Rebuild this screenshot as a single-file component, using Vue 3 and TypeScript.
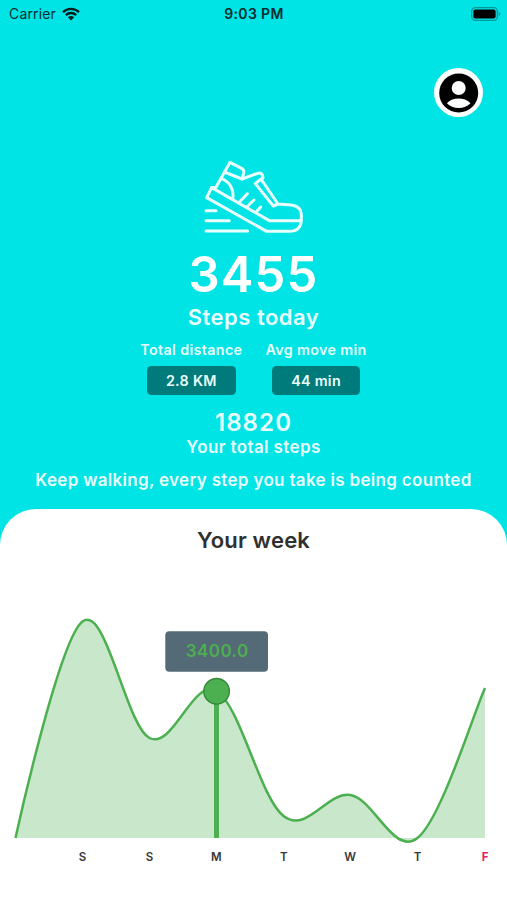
<script setup lang="ts">
import { computed } from 'vue'

interface Point {
  x: number
  y: number
}

interface DayLabel {
  text: string
  x: number
  today?: boolean
}

const stats = [
  { label: 'Total distance', value: '2.8 KM', name: 'distance' },
  { label: 'Avg move min', value: '44 min', name: 'minutes' },
]

const baseline = 268
const smoothness = 0.35

const points: Point[] = [
  { x: 15.5, y: 268 },
  { x: 82.5, y: 51.5 },
  { x: 149.5, y: 168 },
  { x: 216.5, y: 121 },
  { x: 283.5, y: 246 },
  { x: 350.5, y: 225 },
  { x: 417.5, y: 268 },
  { x: 485, y: 118 },
]

const days: DayLabel[] = [
  { text: 'S', x: 82.5 },
  { text: 'S', x: 149.5 },
  { text: 'M', x: 216.3 },
  { text: 'T', x: 283.7 },
  { text: 'W', x: 350 },
  { text: 'T', x: 417.5 },
  { text: 'F', x: 485, today: true },
]

const linePath = computed(() => {
  let d = `M${points[0].x} ${points[0].y}`
  let tx = 0
  let ty = 0
  for (let i = 1; i < points.length; i++) {
    const prev = points[i - 1]
    const cur = points[i]
    const next = points[Math.min(i + 1, points.length - 1)]
    const c1x = prev.x + tx
    const c1y = prev.y + ty
    tx = ((next.x - prev.x) / 2) * smoothness
    ty = ((next.y - prev.y) / 2) * smoothness
    d += ` C${c1x} ${c1y} ${cur.x - tx} ${cur.y - ty} ${cur.x} ${cur.y}`
  }
  return d
})

const areaPath = computed(() => `${linePath.value} V${baseline} H${points[0].x} Z`)
</script>

<template>
  <main class="screen">
    <header class="status">
      <div class="carrier">
        <span>Carrier</span>
        <svg class="wifi" viewBox="0 0 18 14">
          <path d="M1 5.1C5.6.7 12.4.7 17 5.1" />
          <path d="M3.8 8.1C6.8 5.3 11.2 5.3 14.2 8.1" />
          <path class="dot" d="M5.9 10.2C7.8 8.6 10.2 8.6 12.1 10.2L9 13.5Z" />
        </svg>
      </div>
      <span class="clock">9:03 PM</span>
      <svg class="battery" viewBox="0 0 30 14">
        <rect class="shell" x=".7" y=".7" width="25.6" height="12.6" rx="3.6" />
        <rect x="2.4" y="2.4" width="22.2" height="9.2" rx="2" />
        <path class="cap" d="M27.6 4.7Q29.4 5.4 29.4 7T27.6 9.3Z" />
      </svg>
    </header>

    <div class="toolbar">
      <button class="avatar" aria-label="Profile">
        <svg viewBox="0 0 40 40">
          <circle cx="19.7" cy="20" r="19.5" />
          <circle class="person" cx="19.7" cy="15" r="7" />
          <path class="person" d="M7.9 30.2C11 27 15.4 25.6 19.7 25.6S28.4 27 31.5 30.2C28.6 33.4 24.4 34.9 19.7 34.9S10.8 33.4 7.9 30.2Z" />
        </svg>
      </button>
    </div>

    <section class="summary">
      <svg class="shoe" viewBox="0 0 390 285">
        <path d="M65 113L50 143L230 244H298Q334 244 334 207V194Q334 169 304 165L264 162L250 168L196 101L213 87L264 162" />
        <path d="M65 113L78 112L120 37L156 56Q163 60 161 70L156 87L103 66" />
        <path d="M156 87L203 70Q218 66 219 83L213 90" />
        <path d="M65 113L238 212H333" />
        <path d="M93 86C119 94 133 118 128 148" />
        <path d="M146 158L172 131M170 171L192 150M198 187L212 171" />
        <path d="M48 182H78M48 212H118M48 243H173" />
      </svg>
      <div class="today-count">3455</div>
      <div class="today-label">Steps today</div>
      <div class="stats">
        <div v-for="stat in stats" :key="stat.name" class="stat">
          <span class="stat-label">{{ stat.label }}</span>
          <span class="stat-value" :class="stat.name">{{ stat.value }}</span>
        </div>
      </div>
      <div class="total-count">18820</div>
      <div class="total-label">Your total steps</div>
      <p class="message">Keep walking, every step you take is being counted</p>
    </section>

    <section class="week">
      <h2>Your week</h2>
      <svg class="chart" viewBox="0 0 507 310">
        <path class="area" :d="areaPath" />
        <path class="line" :d="linePath" />
        <line class="marker" x1="216.5" y1="121" x2="216.5" :y2="baseline" />
        <circle class="knob" cx="216.6" cy="121.3" r="12.8" />
        <rect class="tip" x="165.3" y="61.3" width="102.7" height="40.4" rx="4" />
        <text class="tip-text" x="217.2" y="87">3400.0</text>
        <text v-for="day in days" :key="day.x" class="day" :class="{ today: day.today }" :x="day.x" y="290.6">{{ day.text }}</text>
      </svg>
    </section>
  </main>
</template>

<style>
body {
  margin: 0;
}
</style>

<style scoped>
.screen {
  width: 507px;
  height: 900px;
  display: flex;
  flex-direction: column;
  overflow: hidden;
  background: #00e4e6;
  font-family: Inter, "Liberation Sans", sans-serif;
  font-weight: 620;
}

.status {
  height: 27px;
  display: grid;
  grid-template-columns: 1fr auto 1fr;
  align-items: center;
  padding: 0 8px 0 9px;
  color: #062d2e;
  font-size: 14px;
}

.carrier {
  display: flex;
  align-items: center;
  gap: 6px;
  font-weight: 400;
  letter-spacing: 0.15px;
}

.wifi {
  width: 18px;
  height: 14px;
  fill: none;
  stroke: #001c1c;
  stroke-width: 2.3;
}

.wifi .dot {
  fill: #001c1c;
  stroke: none;
}

.clock {
  letter-spacing: 0.35px;
}

.battery {
  width: 30px;
  height: 14px;
  justify-self: end;
  margin-right: -2px;
}

.battery .shell {
  fill: none;
  stroke: #04989a;
  stroke-width: 1.3;
}

.battery .cap {
  fill: #04989a;
}

.toolbar {
  height: 90px;
  display: flex;
  justify-content: flex-end;
  align-items: flex-end;
  padding-right: 24px;
}

.avatar {
  width: 49px;
  height: 49px;
  padding: 4.5px;
  border: 0;
  border-radius: 50%;
  background: #fff;
}

.avatar svg {
  display: block;
  width: 40px;
  height: 40px;
}

.avatar .person {
  fill: #fff;
}

.summary {
  height: 392px;
  display: flex;
  flex-direction: column;
  align-items: center;
  color: #e9ffff;
  white-space: nowrap;
}

.shoe {
  width: 130px;
  height: 95px;
  margin-top: 33px;
  margin-left: 3px;
  fill: none;
  stroke: #e9ffff;
  stroke-width: 9;
  stroke-linecap: round;
  stroke-linejoin: round;
}

.today-count {
  margin-top: 3px;
  height: 54px;
  line-height: 54px;
  font-size: 49px;
  letter-spacing: 1.2px;
  color: #fff;
}

.today-label {
  height: 30px;
  line-height: 30px;
  font-size: 22px;
  letter-spacing: 0.5px;
}

.stats {
  display: flex;
  gap: 23px;
  margin-top: 8px;
}

.stat {
  display: flex;
  flex-direction: column;
  align-items: center;
  gap: 7px;
}

.stat-label {
  height: 19px;
  line-height: 19px;
  font-size: 14.3px;
  letter-spacing: 0.36px;
}

.stat-value {
  height: 29px;
  line-height: 29px;
  border-radius: 4.5px;
  background: #007b7c;
  font-size: 14.3px;
  letter-spacing: 0.3px;
  text-align: center;
}

.distance {
  width: 89px;
}

.minutes {
  width: 88px;
}

.total-count {
  margin-top: 14px;
  height: 28px;
  line-height: 28px;
  font-size: 24px;
  letter-spacing: 1.1px;
}

.total-label {
  height: 21px;
  line-height: 21px;
  font-size: 17px;
  letter-spacing: 0.38px;
}

.message {
  margin: 11px 0 0;
  height: 22px;
  line-height: 22px;
  font-size: 17px;
  letter-spacing: 0.32px;
}

.week {
  flex: 1;
  display: flex;
  flex-direction: column;
  border-radius: 36px 36px 0 0;
  background: #fff;
}

.week h2 {
  margin: 16px 0 15px;
  height: 30px;
  line-height: 30px;
  text-align: center;
  font-size: 22px;
  font-weight: 620;
  letter-spacing: 0.2px;
  color: #303030;
}

.chart {
  width: 507px;
  height: 310px;
}

.area {
  fill: #c9e7cb;
}

.line {
  fill: none;
  stroke: #4caf50;
  stroke-width: 2.5;
}

.marker {
  stroke: #4caf50;
  stroke-width: 5;
}

.knob {
  fill: #4caf50;
  stroke: #358a3a;
  stroke-width: 1.4;
}

.tip {
  fill: #546a76;
}

.tip-text {
  fill: #4caf50;
  font-size: 17px;
  letter-spacing: 0.4px;
  text-anchor: middle;
}

.day {
  fill: #383838;
  font-size: 11.5px;
  text-anchor: middle;
}

.day.today {
  fill: #e91e63;
  font-weight: 700;
}
</style>
